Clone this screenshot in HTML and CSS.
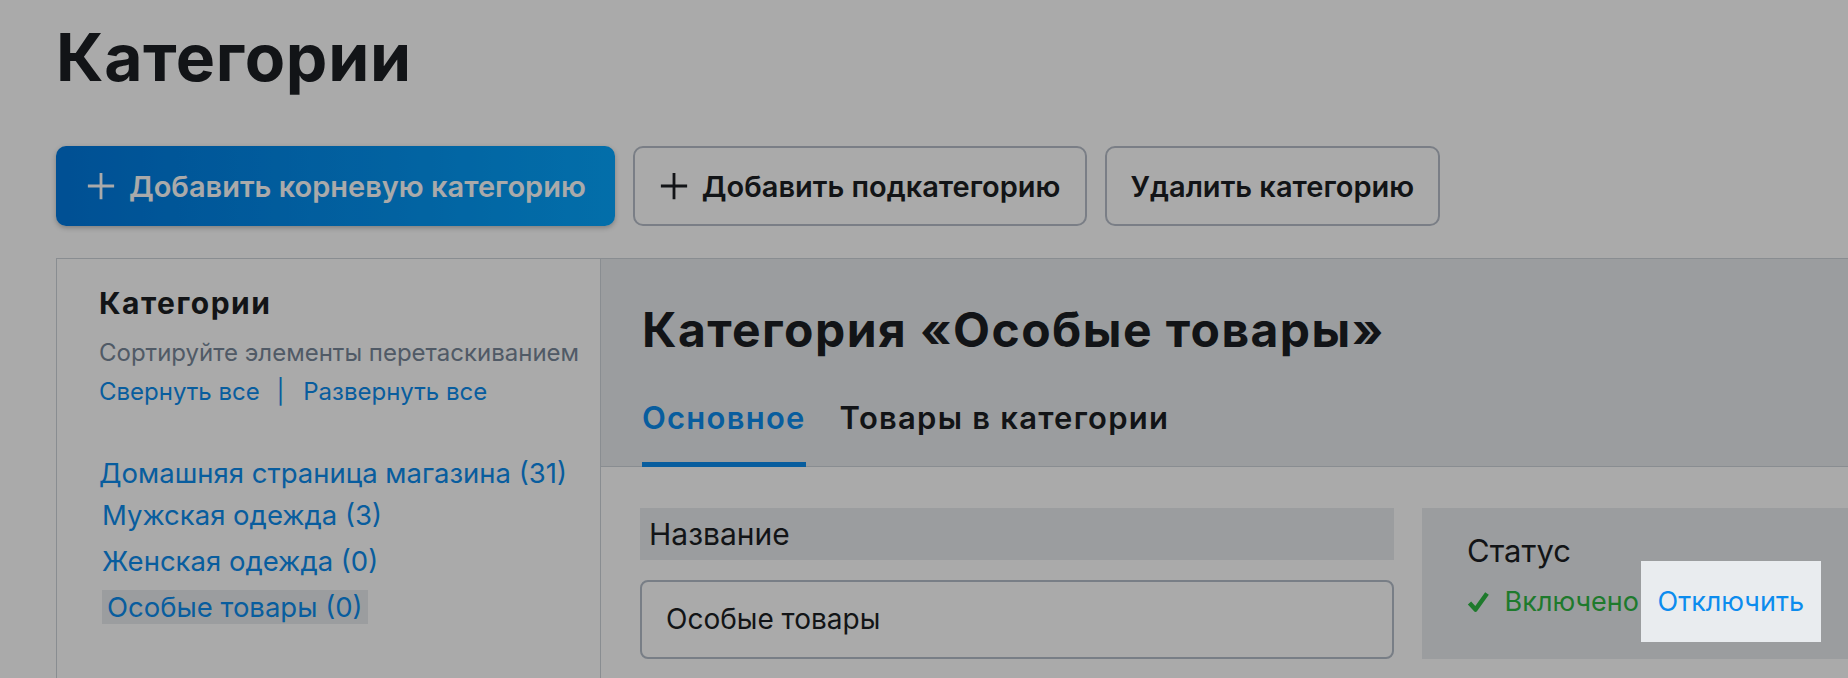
FILE: index.html
```html
<!DOCTYPE html>
<html lang="ru">
  <head>
  <meta charset="utf-8">
  <link rel="stylesheet" href="styles.css">
  </head>
  <body>
    <div class="page">
      <h1 class="page-title">Категории</h1>
      <div class="toolbar">
        <button class="btn btn-primary">
          <svg class="plus" viewBox="0 0 32 32"><path d="M16 2v28M2 16h28"/></svg>
          Добавить корневую категорию
        </button>
        <button class="btn">
          <svg class="plus" viewBox="0 0 32 32"><path d="M16 2v28M2 16h28"/></svg>
          Добавить подкатегорию
        </button>
        <button class="btn">Удалить категорию</button>
      </div>

      <div class="layout">
        <div class="sidebar">
          <h2 class="sidebar-title">Категории</h2>
          <div class="hint">Сортируйте элементы перетаскиванием</div>
          <div class="tree-actions">
            <a href="#">Свернуть все</a>
            <span class="sep">|</span>
            <a href="#">Развернуть все</a>
          </div>
          <ul class="tree">
            <li>
              <a href="#" class="tree-root">Домашняя страница магазина (31)</a>
              <ul>
                <li><a href="#">Мужская одежда (3)</a></li>
                <li><a href="#">Женская одежда (0)</a></li>
                <li><a href="#" class="selected">Особые товары (0)</a></li>
              </ul>
            </li>
          </ul>
        </div>

        <div class="main">
          <div class="main-header">
            <h2 class="main-title">Категория «Особые товары»</h2>
            <div class="tabs">
              <a href="#" class="tab active">Основное</a>
              <a href="#" class="tab">Товары в категории</a>
            </div>
          </div>
          <div class="main-body">
            <div class="field">
              <label class="field-label">Название</label>
              <div class="field-input">Особые товары</div>
            </div>
            <div class="status-box">
              <div class="status-title">Статус</div>
              <div class="status-row">
                <svg class="check" viewBox="0 0 22 22"><path d="M2.5 12l6 6.5L20 2.5"/></svg>
                <span class="status-on">Включено</span>
                <a href="#" class="status-toggle tour-focus">Отключить</a>
              </div>
            </div>
          </div>
        </div>
      </div>
    </div>
  </body>
</html>
```

FILE: styles.css
```css
html, body { margin: 0; padding: 0; background: #fff; overflow: hidden; }
body { color: #1b1e23; font: 30px/1.3 Inter, "Liberation Sans", sans-serif; }
a { color: #0c8cee; text-decoration: none; }
ul { list-style: none; margin: 0; padding: 0; }
h1, h2 { margin: 0; }

.page { padding-left: 56px; }
.page-title { font-size: 66px; line-height: 80px; font-weight: 700; letter-spacing: 0.01em; padding-top: 17px; }

.toolbar { display: flex; gap: 18px; margin-top: 49px; }
.btn {
  display: flex; align-items: center; gap: 13px;
  height: 80px; padding: 0 24px;
  font: 600 29px Inter, sans-serif; color: #1b1e23;
  background: #fff; border: 2px solid #b7bec9; border-radius: 10px;
  cursor: pointer;
}
.btn-primary {
  color: #fff; border: none; padding: 0 29px 0 30px;
  background: linear-gradient(90deg, #0078de, #05a6ff);
  box-shadow: 0 2px 5px rgba(0, 0, 0, .25);
}
.plus { width: 30px; height: 30px; fill: none; stroke: currentColor; stroke-width: 3; }

.layout { display: flex; margin-top: 32px; border-top: 1px solid #ced4da; height: 420px; }

.sidebar {
  flex: none; width: 545px; box-sizing: border-box;
  border-left: 1px solid #ced4da; border-right: 1px solid #ced4da;
  padding: 26px 0 0 42px;
}
.sidebar-title { font-size: 30px; line-height: 36px; font-weight: 700; letter-spacing: 0.05em; }
.hint { font-size: 24px; line-height: 34px; color: #788799; margin-top: 15px; }
.tree-actions { font-size: 24px; line-height: 34px; margin-top: 5px; }
.tree-actions .sep { color: #0c8cee; margin: 0 12px 0 10px; }
.tree { margin-top: 45px; font-size: 27.5px; }
.tree-root { display: block; line-height: 38px; }
.tree ul { padding-left: 3px; }
.tree ul li { line-height: 46px; }
.tree .selected {
  display: inline-block; line-height: 34px; padding: 0 5px;
  background: #e9ecef;
}

.main { flex: 1; }
.main-header { background: #e9ecef; border-bottom: 1px solid #ced4da; padding: 43px 0 0 41px; }
.main-title { font-size: 48px; line-height: 56px; font-weight: 700; letter-spacing: 0.03em; }
.tabs { display: flex; gap: 34px; margin-top: 40px; margin-bottom: -1px; }
.tab {
  font-size: 31px; line-height: 40px; font-weight: 600; letter-spacing: 0.04em;
  color: #1b1e23; padding-bottom: 24px; border-bottom: 5px solid transparent;
}
.tab.active { color: #0c8cee; border-bottom-color: #0c8cee; }

.main-body { display: grid; grid-template-columns: 754px 1fr; gap: 28px; padding: 41px 0 0 39px; }
.field-label { display: block; background: #e9ecef; line-height: 52px; padding-left: 9px; }
.field-input {
  margin-top: 20px; height: 79px; box-sizing: border-box;
  border: 2px solid #b4bdc9; border-radius: 8px;
  display: flex; align-items: center; padding-left: 24px; font-size: 28px;
}

.status-box { background: #e9ecef; padding: 23px 0 29px 45px; }
.status-title { font-size: 31px; line-height: 40px; }
.status-row { margin-top: 13px; font-size: 27px; line-height: 36px; white-space: nowrap; }
.check {
  width: 22px; height: 22px; fill: none; stroke: #2eb743; stroke-width: 4.5;
  stroke-linejoin: round; margin-right: 8px; vertical-align: -2px;
}
.status-on { color: #2eb743; }
.status-toggle { padding: 24px 17px; margin-left: -6px; background: #e9ecef; }

/* guided tour spotlight */
.tour-focus { position: relative; z-index: 10; box-shadow: 0 0 0 4000px rgba(0, 0, 0, .333); }
```
